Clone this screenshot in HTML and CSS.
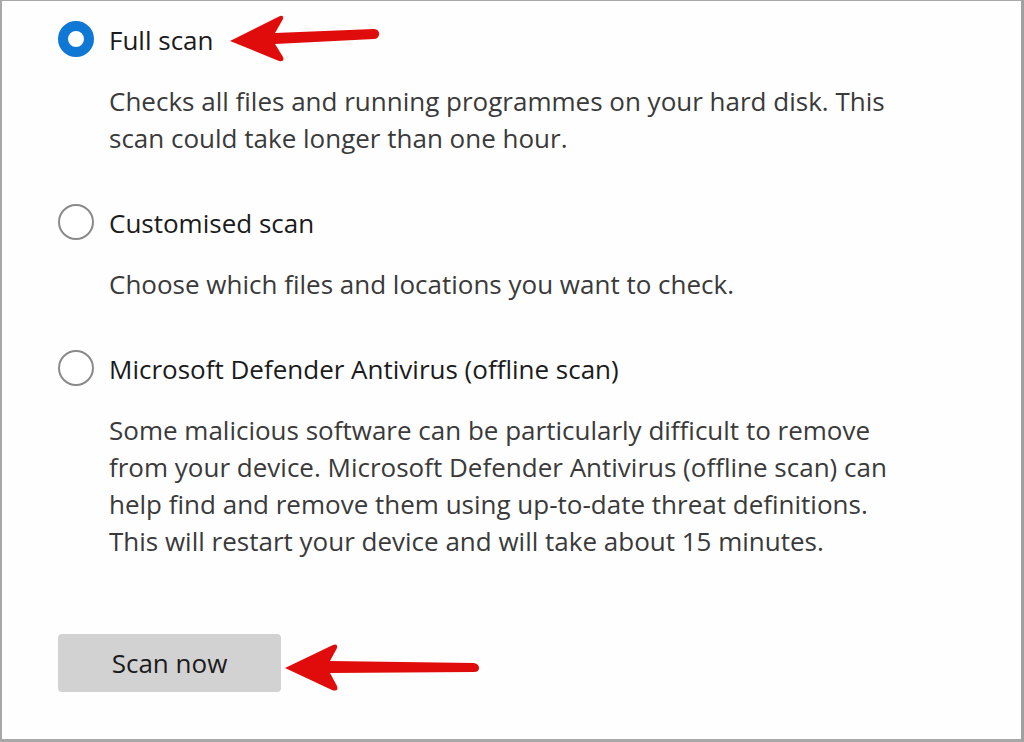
FILE: index.html
```html
<!DOCTYPE html>
<html>
<head>
<meta charset="utf-8">
<link rel="stylesheet" href="styles.css">
</head>
<body>
<div class="frame">
  <div class="options">
    <div class="option">
      <div class="row">
        <span class="radio checked"></span>
        <span class="label">Full scan</span>
      </div>
      <p class="desc">Checks all files and running programmes on your hard disk. This<br>scan could take longer than one hour.</p>
    </div>
    <div class="option">
      <div class="row">
        <span class="radio"></span>
        <span class="label">Customised scan</span>
      </div>
      <p class="desc">Choose which files and locations you want to check.</p>
    </div>
    <div class="option">
      <div class="row">
        <span class="radio"></span>
        <span class="label">Microsoft Defender Antivirus (offline scan)</span>
      </div>
      <p class="desc">Some malicious software can be particularly difficult to remove<br>from your device. Microsoft Defender Antivirus (offline scan) can<br>help find and remove them using up-to-date threat definitions.<br>This will restart your device and will take about 15 minutes.</p>
    </div>
  </div>
  <button class="scan">Scan now</button>

  <svg class="arrow arrow-top" width="160" height="60" viewBox="0 0 160 60">
    <path d="M2 32 L52 7 Q56 6 55 10 L47 24 L146 20 Q152 21 151 26 Q150 30 146 30 L47 35 L55 48 Q57 53 51 52 Z" fill="#e00b0b"/>
  </svg>
  <svg class="arrow arrow-bottom" width="200" height="60" viewBox="0 0 200 60">
    <path d="M2 34 L50 11 Q55 9 54 14 L47 27 L191 29 Q196 30 196 34 Q196 38 191 38 L47 39 L54 52 Q56 58 49 56 Z" fill="#e00b0b"/>
  </svg>
</div>
</body>
</html>
```
FILE: styles.css
```css
html, body {
  margin: 0;
  padding: 0;
  background: #ffffff;
}
.frame {
  position: relative;
  width: 1024px;
  height: 742px;
  box-sizing: border-box;
  border-top: 1px solid #a8a8a8;
  border-left: 2px solid #a8a8a8;
  border-right: 3px solid #a0a0a0;
  border-bottom: 3px solid #a8a8a8;
  background: #fefefe;
  padding: 20px 0 0 56px;
  font-family: "Open Sans", "Noto Sans", sans-serif;
  overflow: hidden;
}
.options {
  display: flex;
  flex-direction: column;
  gap: 47px;
}
.option {
  display: flex;
  flex-direction: column;
}
.row {
  display: flex;
  align-items: center;
  gap: 15px;
  height: 36px;
}
.radio {
  width: 36px;
  height: 36px;
  box-sizing: border-box;
  border-radius: 50%;
  border: 2px solid #8a8a8a;
  background: #fff;
  flex: none;
}
.radio.checked {
  border: 10px solid #0f78d4;
}
.label {
  font-size: 26px;
  color: #1b1b1b;
  position: relative;
  top: 1px;
}
.desc {
  margin: 26px 0 0 51px;
  font-size: 26px;
  line-height: 37px;
  color: #3a3a3a;
}
.scan {
  margin-top: 74px;
  width: 223px;
  height: 58px;
  border: none;
  border-radius: 4px;
  background: #d2d2d2;
  font-family: "Open Sans", "Noto Sans", sans-serif;
  font-size: 26px;
  color: #1b1b1b;
  padding: 0;
}
.arrow {
  position: absolute;
}
.arrow-top {
  left: 226px;
  top: 8px;
}
.arrow-bottom {
  left: 281px;
  top: 633px;
}
```
